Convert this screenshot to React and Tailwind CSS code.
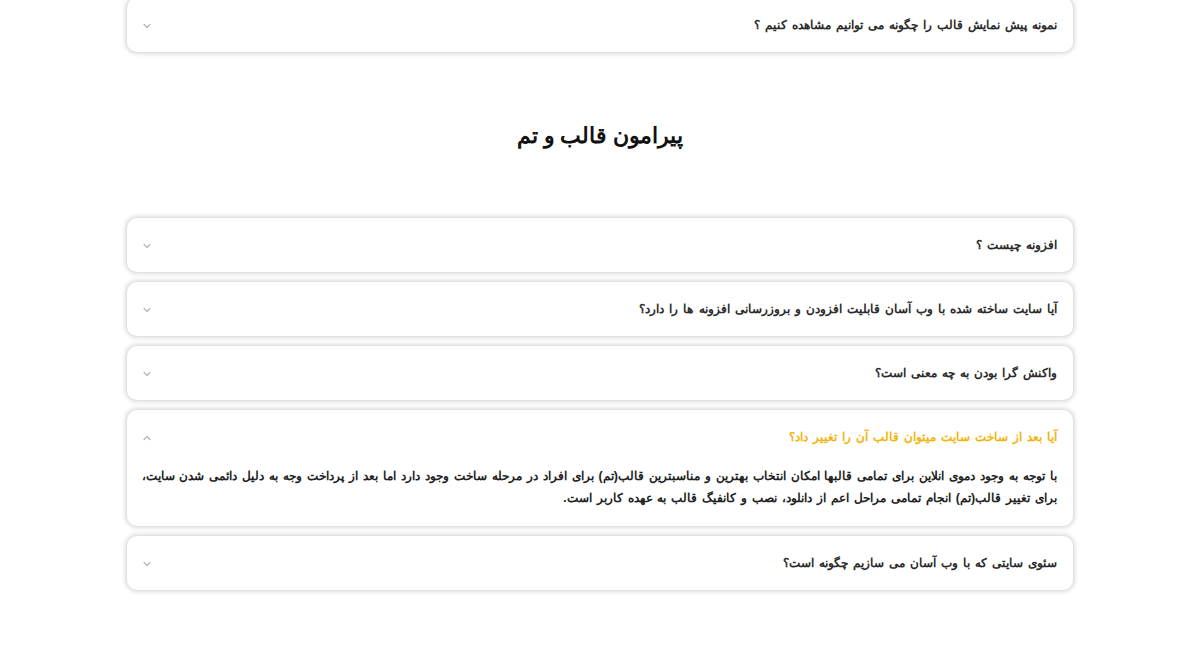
import React from "react";

const font = { fontFamily: "sans-serif" };

function Chevron({ up }) {
  return (
    <svg width="10" height="10" viewBox="0 0 10 10" className="shrink-0">
      <path
        d={up ? "M2 6.5 L5 3.5 L8 6.5" : "M2 3.5 L5 6.5 L8 3.5"}
        fill="none"
        stroke="#b5b5b5"
        strokeWidth="1.2"
        strokeLinecap="round"
        strokeLinejoin="round"
      />
    </svg>
  );
}

function Item({ q, open, answer, className = "" }) {
  return (
    <div
      className={`bg-white rounded-[10px] shadow-[0_0_5px_1px_rgba(0,0,0,0.2)] ${className}`}
    >
      <div className="flex items-center justify-between h-[54px] pr-4 pl-[15px] pt-[1px]">
        <span
          className={`text-[12.4px] [word-spacing:1.6px] font-bold ${open ? "text-[#f2b50c]" : "text-[#2b2b2b]"}`}
        >
          {q}
        </span>
        <Chevron up={open} />
      </div>
      {open && (
        <div className="pr-4 pl-4 pb-[17px] mt-[1px] text-[12.4px] [word-spacing:1.5px] font-bold leading-[22px] text-[#222]">
          {answer.map((l) => (
            <div key={l} className="whitespace-nowrap">
              {l}
            </div>
          ))}
        </div>
      )}
    </div>
  );
}

export default function App() {
  return (
    <div dir="rtl" style={font} className="bg-white min-h-[657px] w-full">
      <div className="w-[946px] mx-auto">
        <Item q="نمونه پیش نمایش قالب را چگونه می توانیم مشاهده کنیم ؟" className="-mt-[2px]" />
        <h2 className="text-center text-[21.5px] font-bold text-[#111] pt-[69px] pb-[67px] leading-[30px]">
          پیرامون قالب و تم
        </h2>
        <div className="flex flex-col gap-[10px]">
          <Item q="افزونه چیست ؟" />
          <Item q="آیا سایت ساخته شده با وب آسان قابلیت افزودن و بروزرسانی افزونه ها را دارد؟" />
          <Item q="واکنش گرا بودن به چه معنی است؟" />
          <Item
            open
            q="آیا بعد از ساخت سایت میتوان قالب آن را تغییر داد؟"
            answer={[
              "با توجه به وجود دموی انلاین برای تمامی قالبها امکان انتخاب بهترین و مناسبترین قالب(تم) برای افراد در مرحله ساخت وجود دارد اما بعد از پرداخت وجه به دلیل دائمی شدن سایت،",
              "برای تغییر قالب(تم) انجام تمامی مراحل اعم از دانلود، نصب و کانفیگ قالب به عهده کاربر است.",
            ]}
          />
          <Item q="سئوی سایتی که با وب آسان می سازیم چگونه است؟" />
        </div>
      </div>
    </div>
  );
}
